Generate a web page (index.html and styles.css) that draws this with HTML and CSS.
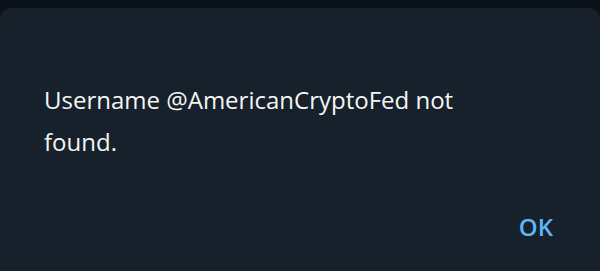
FILE: index.html
```html
<!DOCTYPE html>
<html lang="en">
<head>
    <meta charset="UTF-8">
    <title>Username not found</title>
    <link rel="stylesheet" href="styles.css">
</head>
<body>
    <div class="dialog">
        <div class="dialog-text">Username @AmericanCryptoFed not found.</div>
        <div class="dialog-actions">
            <button class="dialog-btn">OK</button>
        </div>
    </div>
</body>
</html>
```

FILE: styles.css
```css
* {
    margin: 0;
    padding: 0;
    box-sizing: border-box;
}

body {
    font-family: 'Open Sans', 'Noto Sans', sans-serif;
    background: #0b1118;
    height: 271px;
    padding-top: 8px;
    overflow: hidden;
}

.dialog {
    background: #17212b;
    border-radius: 12px 12px 0 0;
    height: 100%;
    padding: 71px 44px 0 44px;
    display: flex;
    flex-direction: column;
}

.dialog-text {
    color: #f5f5f5;
    font-size: 24px;
    line-height: 42px;
    width: 420px;
}

.dialog-actions {
    display: flex;
    justify-content: flex-end;
    margin-top: 48px;
    margin-right: 3px;
}

.dialog-btn {
    background: none;
    border: none;
    padding: 0;
    color: #5eb5f7;
    font-family: inherit;
    font-size: 24px;
    line-height: 32px;
    font-weight: 600;
    cursor: pointer;
}
```
